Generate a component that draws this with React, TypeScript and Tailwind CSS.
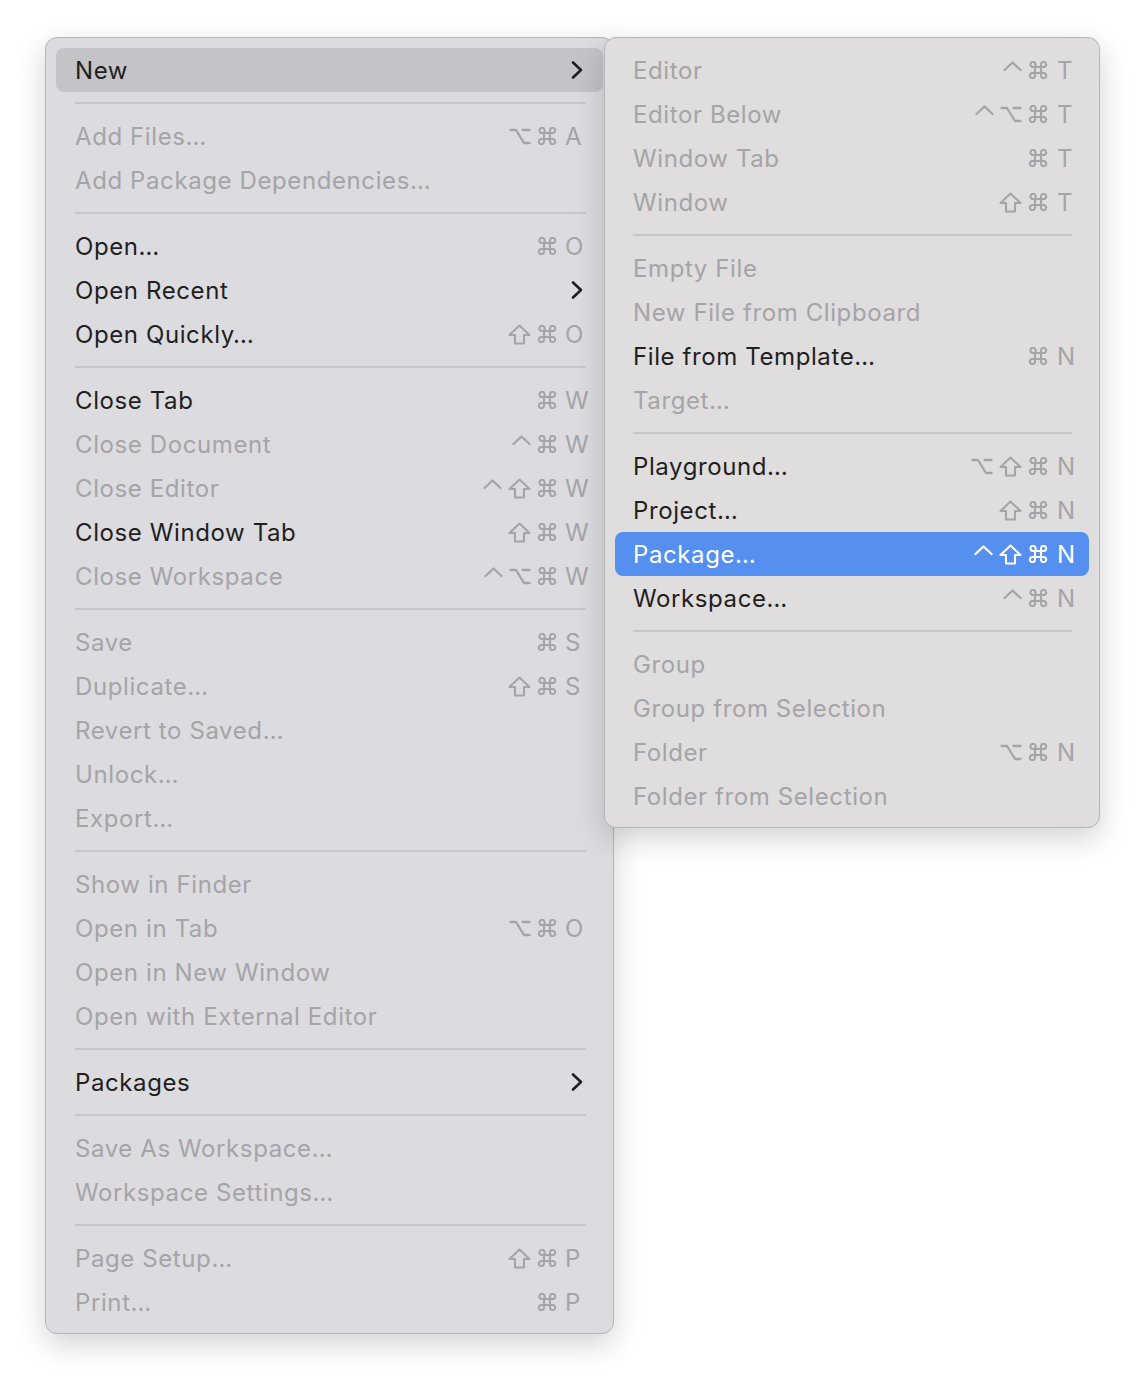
import React from "react";

type Mod = "ctrl" | "opt" | "shift" | "cmd";
type Item =
  | "sep"
  | { l: string; m?: Mod[]; k?: string; d?: boolean; sub?: boolean; hl?: "gray" | "blue" };

const Sym = ({ t, c }: { t: Mod; c: string }) => {
  if (t === "cmd")
    return (
      <svg width="20" height="18" viewBox="0 0 20 18" fill="none" stroke={c} strokeWidth="2.1" strokeLinecap="round" strokeLinejoin="round">
        <path d="M7 5.5v7M13 5.5v7M7 6h6M7 12h6M7 6H5.2A2.6 2.6 0 1 1 7.6 3.4V6M13 6V3.4A2.6 2.6 0 1 1 15.4 6H13M13 12h2.4a2.6 2.6 0 1 1-2.4 2.6V12M7 12v2.6A2.6 2.6 0 1 1 4.6 12H7" />
      </svg>
    );
  if (t === "shift")
    return (
      <svg width="23" height="21" viewBox="0 0 23 21" fill="none" stroke={c} strokeWidth="2.1" strokeLinejoin="round">
        <path d="M11.5 1.5 L21.5 11 H16 V19.5 H7 V11 H1.5 Z" />
      </svg>
    );
  if (t === "opt")
    return (
      <svg width="22" height="17" viewBox="0 0 22 17" fill="none" stroke={c} strokeWidth="2.3" strokeLinecap="round" strokeLinejoin="round">
        <path d="M1.5 2 H7 L15 15 H20.5 M13.5 2 H20.5" />
      </svg>
    );
  return (
    <svg width="19" height="18" viewBox="0 0 19 18" fill="none" stroke={c} strokeWidth="2.3" strokeLinecap="round" strokeLinejoin="round">
      <path d="M1.5 9 L9.5 1.5 L17.5 9" />
    </svg>
  );
};

const Chevron = ({ c }: { c: string }) => (
  <svg width="14" height="20" viewBox="0 0 14 20" fill="none" stroke={c} strokeWidth="2.6" strokeLinecap="round" strokeLinejoin="round">
    <path d="M3 2.5 L11 10 L3 17.5" />
  </svg>
);

const main: Item[] = [
  { l: "New", sub: true, hl: "gray" },
  "sep",
  { l: "Add Files…", m: ["opt", "cmd"], k: "A", d: true },
  { l: "Add Package Dependencies…", d: true },
  "sep",
  { l: "Open…", m: ["cmd"], k: "O" },
  { l: "Open Recent", sub: true },
  { l: "Open Quickly…", m: ["shift", "cmd"], k: "O" },
  "sep",
  { l: "Close Tab", m: ["cmd"], k: "W" },
  { l: "Close Document", m: ["ctrl", "cmd"], k: "W", d: true },
  { l: "Close Editor", m: ["ctrl", "shift", "cmd"], k: "W", d: true },
  { l: "Close Window Tab", m: ["shift", "cmd"], k: "W" },
  { l: "Close Workspace", m: ["ctrl", "opt", "cmd"], k: "W", d: true },
  "sep",
  { l: "Save", m: ["cmd"], k: "S", d: true },
  { l: "Duplicate…", m: ["shift", "cmd"], k: "S", d: true },
  { l: "Revert to Saved…", d: true },
  { l: "Unlock…", d: true },
  { l: "Export…", d: true },
  "sep",
  { l: "Show in Finder", d: true },
  { l: "Open in Tab", m: ["opt", "cmd"], k: "O", d: true },
  { l: "Open in New Window", d: true },
  { l: "Open with External Editor", d: true },
  "sep",
  { l: "Packages", sub: true },
  "sep",
  { l: "Save As Workspace…", d: true },
  { l: "Workspace Settings…", d: true },
  "sep",
  { l: "Page Setup…", m: ["shift", "cmd"], k: "P", d: true },
  { l: "Print…", m: ["cmd"], k: "P", d: true },
];

const sub: Item[] = [
  { l: "Editor", m: ["ctrl", "cmd"], k: "T", d: true },
  { l: "Editor Below", m: ["ctrl", "opt", "cmd"], k: "T", d: true },
  { l: "Window Tab", m: ["cmd"], k: "T", d: true },
  { l: "Window", m: ["shift", "cmd"], k: "T", d: true },
  "sep",
  { l: "Empty File", d: true },
  { l: "New File from Clipboard", d: true },
  { l: "File from Template…", m: ["cmd"], k: "N" },
  { l: "Target…", d: true },
  "sep",
  { l: "Playground…", m: ["opt", "shift", "cmd"], k: "N" },
  { l: "Project…", m: ["shift", "cmd"], k: "N" },
  { l: "Package…", m: ["ctrl", "shift", "cmd"], k: "N", hl: "blue" },
  { l: "Workspace…", m: ["ctrl", "cmd"], k: "N" },
  "sep",
  { l: "Group", d: true },
  { l: "Group from Selection", d: true },
  { l: "Folder", m: ["opt", "cmd"], k: "N", d: true },
  { l: "Folder from Selection", d: true },
];

const GREY = "#a5a4a8";

const Menu = ({ items, isMain }: { items: Item[]; isMain: boolean }) => (
  <div className="flex flex-col">
    {items.map((it, i) => {
      if (it === "sep")
        return (
          <div key={i} className={`h-[22px] flex items-center pr-[17px] ${isMain ? "pl-[19px]" : "pl-[18px]"}`}>
            <div className="h-[2px] w-full bg-[#c7c6ca]" />
          </div>
        );
      const blue = it.hl === "blue";
      const gray = it.hl === "gray";
      const textCol = blue ? "text-white" : it.d ? "text-[#a5a4a8]" : "text-[#1f1f21]";
      const symCol = blue ? "#ffffff" : GREY;
      return (
        <div
          key={i}
          className={`h-[44px] flex items-center rounded-[8px] ${isMain ? "pl-[19px]" : "pl-[18px]"} ${blue ? "bg-[#5590f0]" : gray ? "bg-[#c4c3c8]" : ""}`}
        >
          <span className={`flex-1 text-[24px] leading-none tracking-[0.6px] pt-[2px] ${textCol}`}>{it.l}</span>
          {it.m && (
            <div className="flex items-center gap-[6px]">
              {it.m.map((m, j) => (
                <Sym key={j} t={m} c={symCol} />
              ))}
            </div>
          )}
          <div className={`${isMain ? "w-[46px] pl-[8px]" : "w-[41px] pl-[9px]"} flex items-center`}>
            {it.k && <span className={`text-[24px] leading-none pt-[2px] ${blue ? "text-white" : "text-[#a5a4a8]"}`}>{it.k}</span>}
            {it.sub && (
              <span className="pl-[5px] flex items-center">
                <Chevron c="#1f1f21" />
              </span>
            )}
          </div>
        </div>
      );
    })}
  </div>
);

export default function App() {
  return (
    <div className="min-h-[1388px] w-[1146px] bg-white relative" style={{ fontFamily: "Inter, 'Noto Sans', sans-serif" }}>
      <div className="pt-[37px] pl-[45px]">
        <div className="w-[569px] h-[1297px] rounded-[12px] border border-[#b6b5b9] bg-[#dcdbdf] pt-[10px] pb-[9px] px-[10px] shadow-[0_10px_30px_rgba(0,0,0,0.18)]">
          <Menu items={main} isMain />
        </div>
      </div>
      <div className="absolute left-[604px] top-[37px] w-[496px] h-[791px] rounded-[12px] border border-[#b6b5b9] bg-[#dfdddd] pt-[10px] pb-[9px] px-[10px] shadow-[0_10px_30px_rgba(0,0,0,0.18)]">
        <Menu items={sub} isMain={false} />
      </div>
    </div>
  );
}
